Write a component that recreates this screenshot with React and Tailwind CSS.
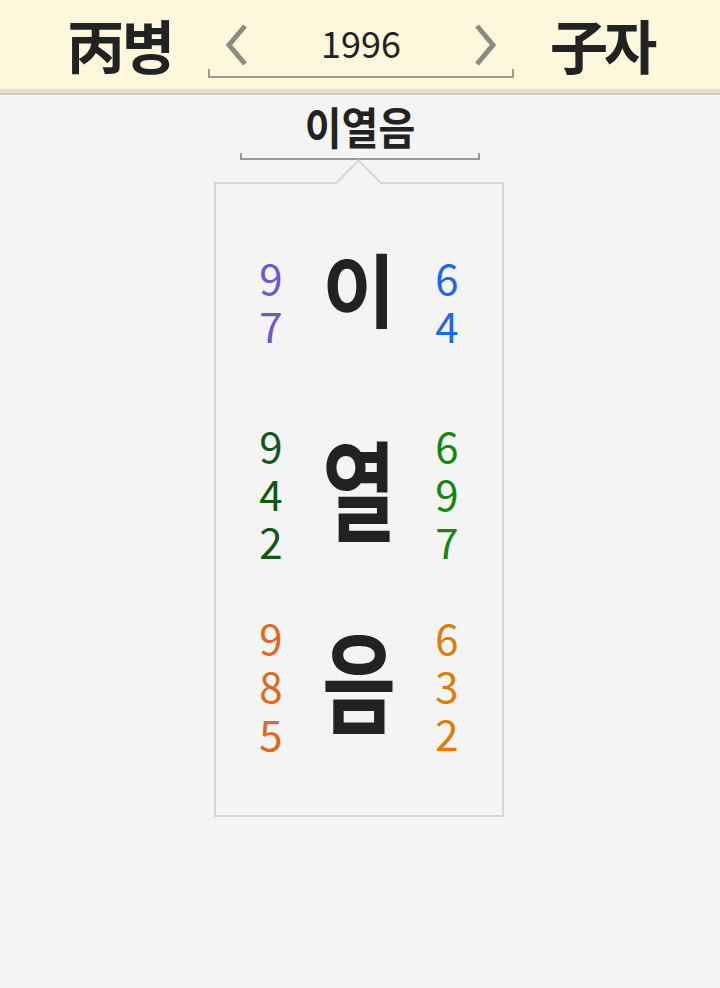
import React from 'react';

const rows = [
  { ch: '이', left: ['9', '7'], right: ['6', '4'], lc: 'text-[#6a58d2]', rc: 'text-[#1f68e4]', fx: '-translate-y-[15px]' },
  { ch: '열', left: ['9', '4', '2'], right: ['6', '9', '7'], lc: 'text-[#13561a]', rc: 'text-[#13880f]', fx: 'scale-y-[1.36] -translate-y-[8px]' },
  { ch: '음', left: ['9', '8', '5'], right: ['6', '3', '2'], lc: 'text-[#dc6a22]', rc: 'text-[#dd7c06]', fx: 'scale-y-[1.36] -translate-y-[8px]' },
];

const font = { fontFamily: '"Noto Sans CJK KR", "Noto Sans", sans-serif' };

function Chevron({ dir }) {
  return (
    <svg width="26" height="46" viewBox="0 0 26 46">
      {dir === 'left' ? (
        <polyline points="21,4 5,23 21,42" fill="none" stroke="#8c8b80" strokeWidth="5" />
      ) : (
        <polyline points="5,4 21,23 5,42" fill="none" stroke="#8c8b80" strokeWidth="5" />
      )}
    </svg>
  );
}

function Numbers({ items, color }) {
  return (
    <div className={`w-[60px] flex flex-col items-center ${color}`}>
      {items.map((n, i) => (
        <div key={i} className="h-[48px] flex items-center text-[42px] leading-none font-normal">{n}</div>
      ))}
    </div>
  );
}

export default function App() {
  return (
    <div className="min-h-[988px] bg-[#f4f4f4] text-[#222]" style={font}>
      {/* header */}
      <div className="h-[89px] bg-[#fdf7db] flex items-center justify-center gap-[36px]">
        <div className="text-[58px] font-bold leading-none tracking-[-3px] pb-[2px]">丙병</div>
        <div className="w-[306px] relative h-[89px]">
          <div className="absolute left-0 right-0 top-[69px] h-[9px] border-x-2 border-b-2 border-[#a09d8c]" />
          <div className="flex items-center justify-between px-[16px] pt-[22px]">
            <Chevron dir="left" />
            <div className="text-[36px] leading-none font-normal -mt-[6px]">1996</div>
            <Chevron dir="right" />
          </div>
        </div>
        <div className="text-[58px] font-bold leading-none tracking-[-4px] pb-[2px]">子자</div>
      </div>
      <div className="h-[4px] bg-[#e3dcc0]" />
      <div className="h-[2px] bg-[#cfcabb]" />

      {/* title */}
      <div className="flex flex-col items-center pt-[6px]">
        <div className="text-[40px] font-bold leading-[50px] scale-y-[1.1]">이열음</div>
        <div className="w-[240px] h-[7px] border-x-2 border-b-2 border-[#999] mt-[2px]" />
      </div>

      {/* card */}
      <div className="relative ml-[214px] mt-[22px] w-[290px] h-[635px] border-2 border-[#d6d6d6] pt-[21px]">
        <div className="absolute left-1/2 -top-[18px] -ml-[17px] w-[33px] h-[33px] rotate-45 bg-[#f4f4f4] border-l-2 border-t-2 border-[#d6d6d6]" />
        {rows.map((r, i) => (
          <div key={i} className="h-[192px] flex items-center justify-center">
            <Numbers items={r.left} color={r.lc} />
            <div className="w-[116px] flex justify-center">
              <div className={`text-[80px] font-bold leading-none ${r.fx}`}>{r.ch}</div>
            </div>
            <Numbers items={r.right} color={r.rc} />
          </div>
        ))}
      </div>
    </div>
  );
}
